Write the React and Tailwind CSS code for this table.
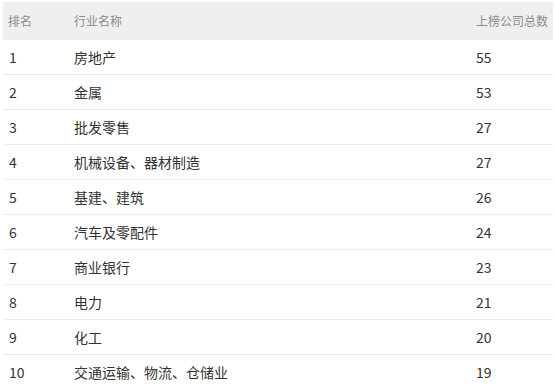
import React from "react";

const rows = [
  ["1", "房地产", "55"],
  ["2", "金属", "53"],
  ["3", "批发零售", "27"],
  ["4", "机械设备、器材制造", "27"],
  ["5", "基建、建筑", "26"],
  ["6", "汽车及零配件", "24"],
  ["7", "商业银行", "23"],
  ["8", "电力", "21"],
  ["9", "化工", "20"],
  ["10", "交通运输、物流、仓储业", "19"],
];

export default function App() {
  return (
    <div
      className="w-[556px] h-[388px] overflow-hidden bg-white pt-[2px] pl-[3px] pr-[3px]"
      style={{ fontFamily: '"Noto Sans CJK SC", "Liberation Sans", sans-serif' }}
    >
      <div className="grid grid-cols-[65px_402px_1fr] h-[38px] items-center bg-[#efefef] text-[12px] text-[#8c8c8c]">
        <div className="pl-[5px]">排名</div>
        <div className="pl-[6px]">行业名称</div>
        <div className="pl-[6px]">上榜公司总数</div>
      </div>
      {rows.map(([r, n, c]) => (
        <div
          key={r}
          className="grid grid-cols-[65px_402px_1fr] h-[35px] items-center border-b border-[#ececec] text-[14px] text-[#333333]"
        >
          <div className="pl-[6px]">{r}</div>
          <div className="pl-[6px]">{n}</div>
          <div className="pl-[6px]">{c}</div>
        </div>
      ))}
    </div>
  );
}
